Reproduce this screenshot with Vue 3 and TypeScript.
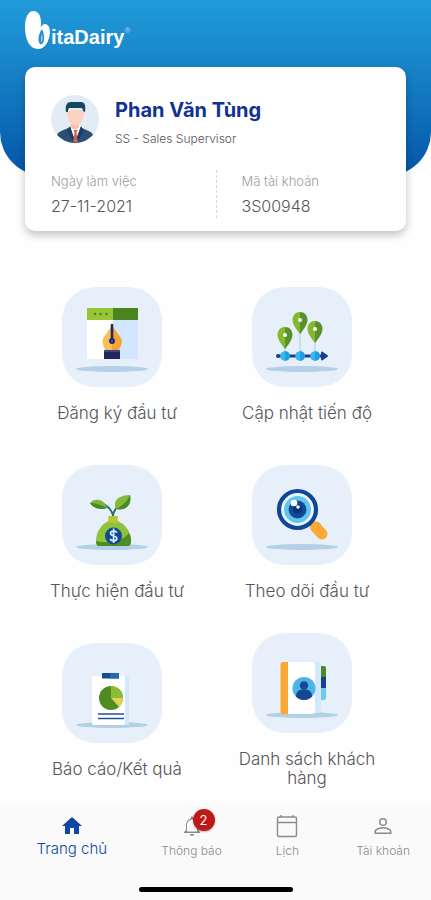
<script setup lang="ts">
interface Field {
  label: string
  value: string
}

interface Feature {
  id: string
  label: string
}

interface Tab {
  id: string
  label: string
  badge?: number
}

const fields: Field[] = [
  { label: 'Ngày làm việc', value: '27-11-2021' },
  { label: 'Mã tài khoản', value: '3S00948' },
]

const features: Feature[] = [
  { id: 'register', label: 'Đăng ký đầu tư' },
  { id: 'progress', label: 'Cập nhật tiến độ' },
  { id: 'invest', label: 'Thực hiện đầu tư' },
  { id: 'track', label: 'Theo dõi đầu tư' },
  { id: 'report', label: 'Báo cáo/Kết quả' },
  { id: 'customers', label: 'Danh sách khách hàng' },
]

const tabs: Tab[] = [
  { id: 'home', label: 'Trang chủ' },
  { id: 'notice', label: 'Thông báo', badge: 2 },
  { id: 'calendar', label: 'Lịch' },
  { id: 'account', label: 'Tài khoản' },
]

const pins = [
  { x: 33, y: 40 },
  { x: 48, y: 25 },
  { x: 63, y: 34 },
]
</script>

<template>
  <div class="screen">
    <header class="hero">
      <div class="logo">
        <svg class="logo-mark" viewBox="0 0 26 40" aria-hidden="true">
          <path d="M8.500 1C13.500 1 16 6 16 12.500C16 14.500 16 16 15.800 17.500C17 15 19 13.800 21 14.200C24 15 25.300 19 24.800 23.500C24 31.500 20 39 13 39C5 39 0 30 0 17C0 7 3.500 1 8.500 1Z" fill="#fff" />
          <path d="M16.800 19C14.300 23 13.200 27 13.500 30.500C13.800 33.500 15.500 35 17.200 34C19.800 32 19.800 24 16.800 19Z" fill="#2a8fcd" />
          <path d="M17 24C16 27 15.700 30 16.200 32.500C17.800 31 18 27.500 17 24Z" fill="#a9d3ee" />
        </svg>
        <span class="logo-text">itaDairy</span><span class="logo-reg">®</span>
      </div>
    </header>

    <main class="content">
      <section class="card">
        <div class="profile">
          <svg class="avatar" viewBox="0 0 48 48" aria-hidden="true">
            <circle cx="24" cy="24" r="24" fill="#e3ebf7" />
            <path d="M6 40C7 36 14 35 19 32L24 35L29 32C34 35 41 36 42 40C37 45 31 48 24 48S11 45 6 40Z" fill="#2a5078" />
            <path d="M19 31L24 47L30 31Z" fill="#fff" />
            <path d="M20 25H28V32C27 35 21 35 20 32Z" fill="#f7bda6" />
            <path d="M16 15H33V20C32 27 28 31 24.500 31S17 27 16 20Z" fill="#fdd2bf" />
            <path d="M15 17C14 10 16 7 20 7H30C34 7 35 11 34 17L32 16C32 14 31 13 30 13H19C17 13 17 15 17 17Z" fill="#154761" />
            <path d="M22.500 35H26.500L25.500 38L27 46L24.500 48L22 46L23.500 38Z" fill="#e05a5c" />
            <path d="M19 31L16 36L22 46L23 43ZM30 31L33 36L27 46L26 43Z" fill="#1d3e63" />
          </svg>
          <div class="identity">
            <h1 class="name">Phan Văn Tùng</h1>
            <p class="role">SS - Sales Supervisor</p>
          </div>
        </div>
        <dl class="fields">
          <div v-for="field in fields" :key="field.label" class="field">
            <dt>{{ field.label }}</dt>
            <dd>{{ field.value }}</dd>
          </div>
        </dl>
      </section>

      <section class="features">
        <button v-for="feature in features" :key="feature.id" type="button" class="feature">
          <svg class="tile" viewBox="0 0 100 100" aria-hidden="true">
            <path d="M35 0H65C86 0 100 14 100 35V65C100 86 86 100 65 100H35C14 100 0 86 0 65V35C0 14 14 0 35 0Z" fill="#e6effa" />
            <ellipse cx="50" cy="82" rx="36" ry="3" fill="#b4d0e7" />

            <g v-if="feature.id === 'register'">
              <path d="M25 33H51V72H25Z" fill="#fff" />
              <path d="M51 33H76V72H51Z" fill="#d2e6fd" />
              <path d="M25 21H51V33H25Z" fill="#97c534" />
              <path d="M51 21H76V33H51Z" fill="#4c8420" />
              <g fill="#4c8420">
                <circle cx="33" cy="27" r="1.300" />
                <circle cx="38.500" cy="27" r="1.300" />
                <circle cx="44.500" cy="27" r="1.300" />
              </g>
              <path d="M50 38C46 45 41 50 40.500 54C40.500 57 42 60 43 63H50Z" fill="#fdbf55" />
              <path d="M50 38C54 45 59.500 50 60 54C60 57 58 60 57 63H50Z" fill="#f8a338" />
              <path d="M42 63H58V72H42Z" fill="#23265f" />
              <path d="M42 64H58" stroke="#4a4e91" stroke-width="1.500" />
              <path d="M50 38V54" stroke="#202b66" stroke-width="2.600" stroke-linecap="round" />
              <circle cx="50" cy="54" r="3" fill="#202b66" />
              <circle cx="50" cy="54" r="1" fill="#466fae" />
            </g>

            <g v-else-if="feature.id === 'progress'">
              <path d="M33 59V68M48 44V68M63 54V68" stroke="#b5dcf7" stroke-width="1.500" />
              <path d="M25 69H71" stroke="#1d3c91" stroke-width="3" />
              <path d="M70 65.500L75 69L70 72.500Z" fill="#1d3c91" stroke="#1d3c91" stroke-width="2" stroke-linejoin="round" />
              <circle cx="26" cy="69" r="2" fill="#1d3c91" />
              <g v-for="pin in pins" :key="pin.x" :transform="`translate(${pin.x} ${pin.y})`">
                <path d="M0 0C-4.500 0 -7.500 3.500 -7.500 8C-7.500 12 -4 17 0 22Z" fill="#84b82f" />
                <path d="M0 0C4.500 0 7.500 3.500 7.500 8C7.500 12 4 17 0 22Z" fill="#5a9128" />
                <circle cx="0" cy="8" r="2" fill="#fff" />
              </g>
              <g v-for="pin in pins" :key="`stop-${pin.x}`">
                <circle :cx="pin.x" cy="69" r="4.800" fill="#37b9ef" />
                <path :d="`M${pin.x} 64.200A4.800 4.800 0 0 1 ${pin.x} 73.800Z`" fill="#219ddc" />
              </g>
            </g>

            <g v-else-if="feature.id === 'invest'">
              <path d="M51 52C51 47 48 43 42 39M51 51C51 46 55 42 61 36" fill="none" stroke="#1e7265" stroke-width="1.800" />
              <path d="M28 38C32 33 42 33 45 43C39 45 32 44 28 38Z" fill="#7fb735" />
              <path d="M28 38C34 38 40 40 45 43C39 45 32 44 28 38Z" fill="#4a8929" />
              <path d="M68 30C58 30 50 35 54 44C64 46 70 40 68 30Z" fill="#83b935" />
              <path d="M68 30C65 37 60 41 54 44C64 46 70 40 68 30Z" fill="#4a8929" />
              <path d="M46 56H56C64 60 69 67 69 76C69 79 68 81 66 81H37C35 81 34 79 34 76C34 67 39 60 46 56Z" fill="#8ec33b" />
              <path d="M67 68C69 71 69 74 69 76C69 79 68 81 66 81H37C35 81 34 79 34 76C46 79 60 77 67 68Z" fill="#4f8c28" />
              <path d="M46 51H56L55 55L57 58H45L47 55Z" fill="#a7ca3b" />
              <path d="M46 55H56" stroke="#e2b53e" stroke-width="1.500" />
              <circle cx="51.500" cy="71" r="8.500" fill="#124994" />
              <path d="M55 67.500C53.500 65.500 48.500 65.700 48.500 68.300C48.500 71.500 54.800 70 54.800 73.500C54.800 76.500 49.500 76.500 48 74M51.600 63.500V78" fill="none" stroke="#d5f0ff" stroke-width="1.700" />
            </g>

            <g v-else-if="feature.id === 'track'">
              <path d="M58 57L63 62" stroke="#124994" stroke-width="5" />
              <path d="M63.500 62L70 69" stroke="#fca934" stroke-width="11" stroke-linecap="round" />
              <path d="M58.500 64L66 56.500L69 59L61 67Z" fill="#fca934" />
              <circle cx="45.500" cy="44.500" r="18.500" fill="#e9f6ff" stroke="#104598" stroke-width="4.200" />
              <circle cx="45.500" cy="44.500" r="13.500" fill="#62c5ef" />
              <circle cx="45.500" cy="44.500" r="9" fill="#124a9a" />
              <circle cx="45.500" cy="44" r="4.500" fill="#0b3374" />
              <circle cx="42" cy="38" r="3.300" fill="#fff" />
              <circle cx="46" cy="42" r="1.800" fill="#fff" />
            </g>

            <g v-else-if="feature.id === 'report'">
              <rect x="34" y="33" width="33" height="49" rx="2" fill="#d2e8fc" />
              <rect x="30" y="33" width="33" height="49" rx="2" fill="#fff" />
              <path d="M40 30H57V35.500H40Z" fill="#174b99" />
              <path d="M48 30H57V35.500H48Z" fill="#2466b0" />
              <circle cx="49" cy="55" r="12" fill="#4f8a23" />
              <path d="M49 55V43A12 12 0 0 1 61 55Z" fill="#8bbd35" />
              <path d="M49 55H61A12 12 0 0 1 57 64Z" fill="#dcd454" />
              <path d="M36 71H62M36 75.500H62" stroke="#1e5399" stroke-width="1.700" />
            </g>

            <g v-else>
              <path d="M68 33H72Q74 33 74 35V45H68Z" fill="#50862c" />
              <path d="M68 44H74V55H68Z" fill="#173f98" />
              <path d="M68 55H74V65Q74 67 72 67H68Z" fill="#6fc7f3" />
              <path d="M59 29H66Q69 29 69 32V77Q69 80 66 80H59Z" fill="#d2e8fc" />
              <path d="M35 29H60Q63 29 63 32V78Q63 81 60 81H35Z" fill="#fff" />
              <path d="M36 29H31Q28.500 29 28.500 31.500V79Q28.500 81.500 31 81.500H36Z" fill="#fca934" />
              <circle cx="52" cy="55.500" r="11.500" fill="#4bb5e9" />
              <circle cx="52" cy="52.500" r="4.200" fill="#174692" />
              <path d="M44 63.500C44 58.500 47 57 50 56.500H54C57 57 60 58.500 60 63.500C56 68 48 68 44 63.500Z" fill="#174692" />
            </g>
          </svg>
          <span class="feature-label">{{ feature.label }}</span>
        </button>
      </section>
    </main>

    <nav class="tabbar">
      <ul class="tabs">
        <li v-for="tab in tabs" :key="tab.id" class="tab" :class="{ active: tab.id === 'home' }">
          <a href="#" class="tab-link">
            <span class="tab-icon">
              <svg v-if="tab.id === 'home'" viewBox="0 0 24 24" aria-hidden="true">
                <path d="M10 20V14H14V20H19V12H22L12 3L2 12H5V20Z" fill="currentColor" />
              </svg>
              <svg v-else-if="tab.id === 'notice'" viewBox="0 0 24 24" aria-hidden="true">
                <path d="M12 22C13.100 22 14 21.100 14 20H10C10 21.100 10.900 22 12 22ZM18 16V11C18 7.930 16.370 5.360 13.500 4.680V4C13.500 3.170 12.830 2.500 12 2.500S10.500 3.170 10.500 4V4.680C7.640 5.360 6 7.920 6 11V16L4 18V19H20V18ZM17 17.500H7V11C7 8 9 5.700 12 5.700S17 8 17 11Z" fill="currentColor" />
              </svg>
              <svg v-else-if="tab.id === 'calendar'" viewBox="0 0 24 24" aria-hidden="true">
                <path d="M4 3H20Q21.500 3 21.500 4.500V21Q21.500 22.500 20 22.500H4Q2.500 22.500 2.500 21V4.500Q2.500 3 4 3ZM2.500 8.500H21.500M6 1V3M18 1V3" fill="none" stroke="currentColor" stroke-width="1.400" />
              </svg>
              <svg v-else viewBox="0 0 24 24" aria-hidden="true">
                <circle cx="12" cy="8" r="3.300" fill="none" stroke="currentColor" stroke-width="1.500" />
                <path d="M4.200 19.300V17.500C4.200 15 9 13.800 12 13.800S19.800 15 19.800 17.500V19.300Z" fill="none" stroke="currentColor" stroke-width="1.500" />
              </svg>
              <span v-if="tab.badge" class="badge">{{ tab.badge }}</span>
            </span>
            <span class="tab-label">{{ tab.label }}</span>
          </a>
        </li>
      </ul>
      <div class="home-indicator"></div>
    </nav>
  </div>
</template>

<style>
body {
  background: #fefefe;
}
</style>

<style scoped>
.screen {
  display: flex;
  flex-direction: column;
  min-height: 100vh;
  font-family: Inter, "Noto Sans", sans-serif;
  font-weight: 300;
  color: #55555a;
}

.hero {
  box-sizing: border-box;
  height: 176px;
  padding: 10px 25px;
  border-radius: 0 0 44px 44px;
  background: linear-gradient(#209bd9, #1987ca 33%, #0555a9);
}

.logo {
  display: flex;
  align-items: flex-start;
  color: #fff;
  font-family: "Liberation Sans", Arial, sans-serif;
}

.logo-mark {
  width: 26px;
  height: 40px;
}

.logo-text {
  margin-top: 15px;
  font-size: 20px;
  font-weight: 700;
  line-height: 24px;
}

.logo-reg {
  margin-top: 16px;
  font-size: 8px;
  line-height: 10px;
  opacity: 0.6;
}

.content {
  display: flex;
  flex-direction: column;
  gap: 46px;
  margin-top: -109px;
  padding-bottom: 16px;
}

.card {
  margin: 0 25px;
  padding: 28px 26px 13px;
  border-radius: 10px;
  background: #fff;
  box-shadow: 0 4px 9px rgba(0, 0, 0, 0.24);
}

.profile {
  display: flex;
  align-items: flex-start;
  gap: 16px;
}

.avatar {
  width: 48px;
  height: 48px;
}

.identity {
  display: flex;
  flex-direction: column;
  gap: 7px;
  padding-top: 3px;
}

.name {
  margin: 0;
  font-size: 20px;
  font-weight: 700;
  line-height: 24px;
  color: #103394;
}

.role {
  margin: 0;
  font-size: 12px;
  line-height: 20px;
}

.fields {
  display: grid;
  grid-template-columns: 1fr 1fr;
  margin: 21px 0 0;
}

.field + .field {
  padding-left: 25px;
  border-left: 1px dashed #d9dadd;
}

.field dt {
  font-size: 13px;
  line-height: 22px;
  color: #9a9da3;
}

.field dd {
  margin: 0;
  padding-top: 2px;
  font-size: 16px;
  line-height: 24px;
}

.features {
  display: grid;
  grid-template-columns: 1fr 1fr;
  grid-auto-rows: 1fr;
  row-gap: 23px;
  padding: 0 29px 0 22px;
}

.feature {
  display: flex;
  flex-direction: column;
  align-items: center;
  justify-content: center;
  gap: 17px;
  padding: 0 24px;
  border: 0;
  background: none;
  font: inherit;
  color: inherit;
}

.tile {
  width: 100px;
  height: 100px;
  margin-right: 10px;
}

.feature-label {
  font-size: 17px;
  line-height: 19px;
}

.tabbar {
  display: flex;
  flex-direction: column;
  align-items: center;
  gap: 26px;
  margin-top: auto;
  padding: 8px 0;
  background: #fafafa;
}

.tabs {
  display: flex;
  align-self: stretch;
  margin: 0;
  padding: 0;
  list-style: none;
}

.tab {
  flex: 2;
}

.tab.active {
  flex: 3;
}

.tab-link {
  display: flex;
  flex-direction: column;
  align-items: center;
  gap: 1px;
  color: #8c8c8c;
  text-decoration: none;
}

.active .tab-link {
  color: #0d47a1;
}

.tab-icon {
  position: relative;
  height: 28px;
}

.tab-icon svg {
  display: block;
  width: 24px;
  height: 28px;
}

.badge {
  position: absolute;
  top: -3px;
  left: 13px;
  width: 22px;
  height: 22px;
  border-radius: 50%;
  background: #c01818;
  box-shadow: 0 1px 2px rgba(0, 0, 0, 0.3);
  color: #fff;
  font-size: 13px;
  font-weight: 400;
  line-height: 22px;
  text-align: center;
}

.tab-label {
  font-size: 12px;
  line-height: 20px;
}

.active .tab-label {
  font-size: 15px;
  line-height: 16px;
}

.home-indicator {
  width: 154px;
  height: 5px;
  border-radius: 3px;
  background: #000;
}
</style>
